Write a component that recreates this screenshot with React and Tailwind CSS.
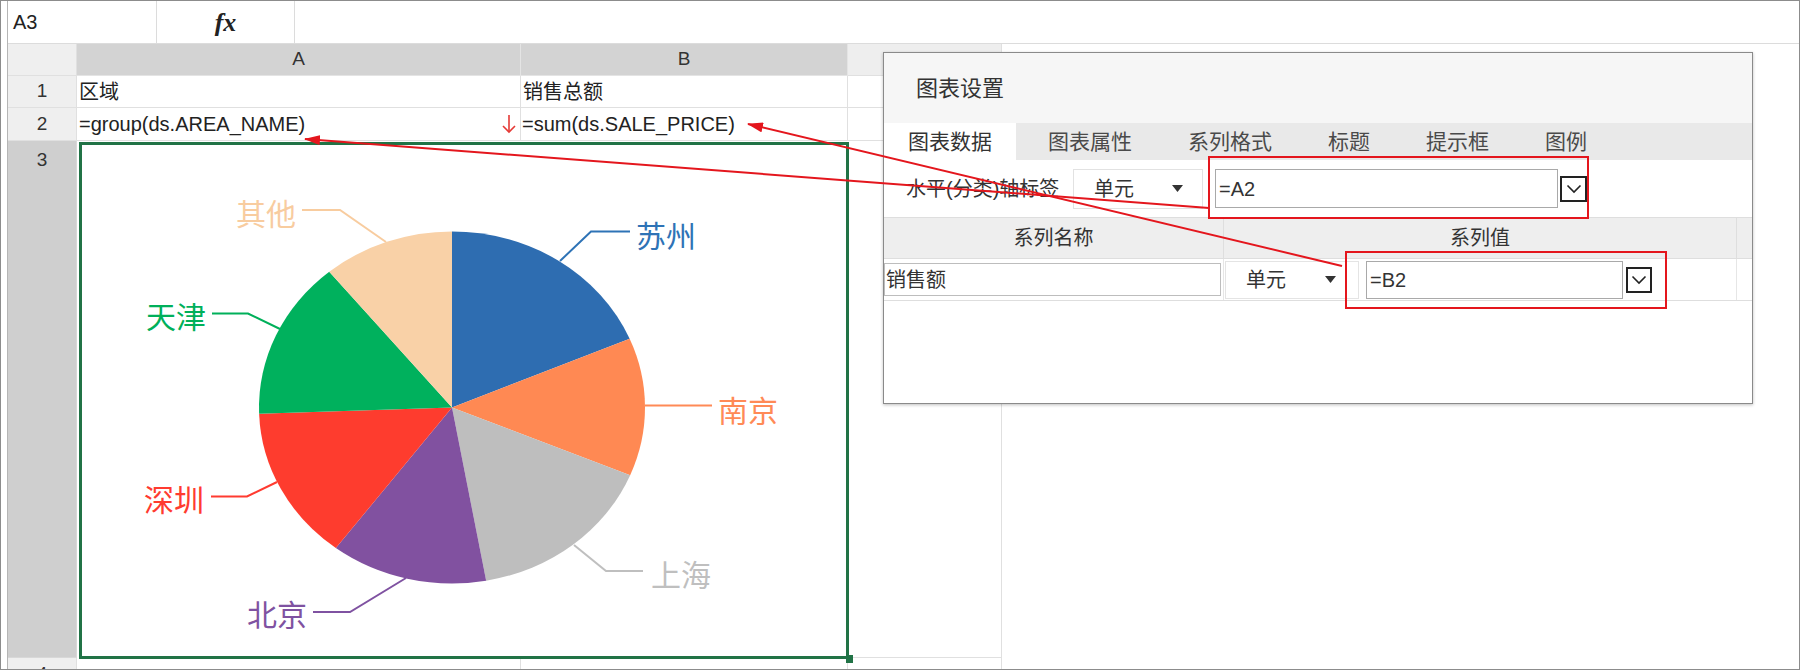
import React from 'react';

const CX = 452;
const CY = 407.5;
const RX = 193;
const RY = 176;

const slices = [
  { from: 0, to: 67, color: '#2e6db1' },
  { from: 67, to: 112.6, color: '#ff8953' },
  { from: 112.6, to: 169.8, color: '#bebebe' },
  { from: 169.8, to: 217, color: '#8151a0' },
  { from: 217, to: 268, color: '#fe3c2e' },
  { from: 268, to: 320.5, color: '#00b15d' },
  { from: 320.5, to: 360, color: '#f9d1a7' },
];

const labels = [
  { text: '其他', color: '#f8cc9f', x: 296, y: 212, anchor: 'end', line: '386,242 340,210 302,210' },
  { text: '苏州', color: '#2e73b6', x: 636, y: 234, anchor: 'start', line: '560,261 591,231.5 630,231.5' },
  { text: '天津', color: '#00b05a', x: 206, y: 315, anchor: 'end', line: '280,329 248,313.5 212,313.5' },
  { text: '南京', color: '#ff8a56', x: 718, y: 409, anchor: 'start', line: '645,405.5 712,405.5' },
  { text: '深圳', color: '#ff3b30', x: 204, y: 498, anchor: 'end', line: '277,482 247,496.5 211,496.5' },
  { text: '上海', color: '#bfbfbf', x: 651, y: 573, anchor: 'start', line: '574,545 606,571 643,571' },
  { text: '北京', color: '#7f52a1', x: 307, y: 613, anchor: 'end', line: '406,578 350,612 313,612' },
];

function pt(a) {
  const r = (a * Math.PI) / 180;
  return [CX + RX * Math.sin(r), CY - RY * Math.cos(r)];
}

function slicePath(a0, a1) {
  const [x0, y0] = pt(a0);
  const [x1, y1] = pt(a1);
  const large = a1 - a0 > 180 ? 1 : 0;
  return `M${CX} ${CY} L${x0} ${y0} A${RX} ${RY} 0 ${large} 1 ${x1} ${y1} Z`;
}

const PieChart = () => (
  <svg className="absolute inset-0" width="771" height="517" viewBox="77 141 771 517">
    {slices.map((s, i) => (
      <path key={i} d={slicePath(s.from, s.to)} fill={s.color} />
    ))}
    {labels.map((l) => (
      <g key={l.text}>
        <polyline points={l.line} fill="none" stroke={l.color} strokeWidth="2" />
        <text
          x={l.x}
          y={l.y}
          fill={l.color}
          fontSize="30"
          textAnchor={l.anchor}
          dominantBaseline="central"
          fontFamily="'Noto Sans CJK SC', sans-serif"
        >
          {l.text}
        </text>
      </g>
    ))}
  </svg>
);

const Triangle = () => (
  <svg width="11" height="7" viewBox="0 0 11 7">
    <path d="M0 0 L11 0 L5.5 7 Z" fill="#333" />
  </svg>
);

const DropButton = ({ className }) => (
  <div className={`flex items-center justify-center border-2 border-[#222] bg-white ${className}`}>
    <svg width="16" height="10" viewBox="0 0 16 10">
      <polyline points="1.5,1.5 8,8 14.5,1.5" fill="none" stroke="#222" strokeWidth="1.6" />
    </svg>
  </div>
);

const tabs = ['图表数据', '图表属性', '系列格式', '标题', '提示框', '图例'];

const ChartDialog = () => (
  <div className="absolute left-[882px] top-[51px] w-[870px] h-[352px] border border-[#8a8a8a] bg-white shadow-[0_1px_3px_rgba(0,0,0,0.25)] text-[#333]">
    <div className="h-[70px] bg-[#f6f6f6] flex items-center pl-[32px] text-[22px]">图表设置</div>
    <div className="h-[37px] bg-[#e9e9e9] flex gap-[8px]">
      {tabs.map((t, i) => (
        <div
          key={t}
          className={`px-[24px] flex items-center text-[21px] ${i === 0 ? 'bg-white text-[#333]' : 'text-[#4a4a4a]'}`}
        >
          {t}
        </div>
      ))}
    </div>
    <div className="h-[57px] flex items-center">
      <div className="w-[189px] pl-[22px] text-[20px] whitespace-nowrap">水平(分类)轴标签</div>
      <div className="w-[130px] h-[40px] border border-[#e2e2e2] flex items-center justify-between pl-[20px] pr-[19px] text-[20px]">
        <span>单元</span>
        <Triangle />
      </div>
      <div className="ml-[12px] w-[343px] h-[39px] border border-[#a9a9a9] flex items-center pl-[3px] text-[20px]">=A2</div>
      <DropButton className="ml-[2px] w-[27px] h-[26px]" />
    </div>
    <div className="h-[42px] flex bg-[#eeeeee] border-y border-[#dedede] text-[20px]">
      <div className="w-[339px] flex items-center justify-center">系列名称</div>
      <div className="w-[513px] border-l border-[#dedede] flex items-center justify-center">系列值</div>
      <div className="flex-1 border-l border-[#dedede]" />
    </div>
    <div className="h-[42px] flex border-b border-[#dedede] text-[20px]">
      <div className="w-[339px] flex items-center">
        <div className="w-[337px] h-[33px] border border-[#bdbdbd] flex items-center pl-[1px]">销售额</div>
      </div>
      <div className="w-[513px] border-l border-[#e6e6e6] flex items-center pl-[1px]">
        <div className="w-[134px] h-[38px] border border-[#e4e4e4] flex items-center justify-between pl-[20px] pr-[22px]">
          <span>单元</span>
          <Triangle />
        </div>
        <div className="ml-[7px] w-[257px] h-[38px] border border-[#a9a9a9] flex items-center pl-[3px]">=B2</div>
        <DropButton className="ml-[3px] w-[26px] h-[26px]" />
      </div>
      <div className="flex-1 border-l border-[#e6e6e6]" />
    </div>
  </div>
);

const Annotations = () => (
  <svg className="absolute left-[-1px] top-[-1px] pointer-events-none" width="1800" height="670" viewBox="0 0 1800 670">
    <defs>
      <marker id="head" markerWidth="16" markerHeight="10" refX="15" refY="5" orient="auto" markerUnits="userSpaceOnUse">
        <path d="M0 0 L16 5 L0 10 Z" fill="#e4161d" />
      </marker>
    </defs>
    <line x1="1209" y1="208" x2="305" y2="139" stroke="#e4161d" strokeWidth="2" markerEnd="url(#head)" />
    <line x1="1342" y1="266" x2="748" y2="124" stroke="#e4161d" strokeWidth="2" markerEnd="url(#head)" />
    <rect x="1209" y="157" width="379" height="61" fill="none" stroke="#e4161d" strokeWidth="2" />
    <rect x="1346" y="252" width="320" height="56" fill="none" stroke="#e4161d" strokeWidth="2" />
  </svg>
);

const DownArrow = () => (
  <svg width="16" height="20" viewBox="0 0 16 20">
    <line x1="8" y1="1" x2="8" y2="18" stroke="#e53935" strokeWidth="1.6" />
    <polyline points="2,12 8,18 14,12" fill="none" stroke="#e53935" strokeWidth="1.6" />
  </svg>
);

const App = () => {
  return (
    <div className="relative w-[1800px] h-[670px] overflow-hidden bg-white border border-[#8c8c8c] font-['Liberation_Sans','Noto_Sans_CJK_SC',sans-serif] text-[#222]">
      <div className="ml-[6px] h-full border-l border-[#b5b5b5]">
        {/* formula bar */}
        <div className="flex h-[43px] border-b border-[#dcdcdc]">
          <div className="w-[149px] border-r border-[#dcdcdc] flex items-center pl-[5px] text-[20px]">A3</div>
          <div className="w-[138px] border-r border-[#dcdcdc] flex items-center justify-center font-['Liberation_Serif',serif] italic font-bold text-[26px]">
            fx
          </div>
        </div>

        {/* column headers */}
        <div className="flex h-[32px] text-[19px] text-[#333]">
          <div className="w-[69px] bg-[#efefef] border-r border-b border-[#e0e0e0]" />
          <div className="w-[444px] bg-[#d3d3d3] border-r border-b border-[#e4e4e4] flex items-center justify-center">A</div>
          <div className="w-[327px] bg-[#d3d3d3] border-r border-b border-[#e4e4e4] flex items-center justify-center">B</div>
          <div className="w-[154px] bg-[#eeeeee] border-r border-b border-[#e0e0e0]" />
        </div>

        {/* row 1 */}
        <div className="flex h-[32px] text-[20px]">
          <div className="w-[69px] bg-[#efefef] border-r border-b border-[#e0e0e0] flex items-center justify-center text-[19px] text-[#333]">1</div>
          <div className="w-[444px] border-r border-b border-[#e0e0e0] flex items-center pl-[2px]">区域</div>
          <div className="w-[327px] border-r border-b border-[#e0e0e0] flex items-center pl-[2px]">销售总额</div>
          <div className="w-[154px] border-r border-b border-[#e0e0e0]" />
        </div>

        {/* row 2 */}
        <div className="flex h-[33px] text-[20px]">
          <div className="w-[69px] bg-[#efefef] border-r border-b border-[#e0e0e0] flex items-center justify-center text-[19px] text-[#333]">2</div>
          <div className="w-[444px] border-r border-b border-[#e0e0e0] flex items-center justify-between pl-[2px] pr-[3px]">
            <span>=group(ds.AREA_NAME)</span>
            <DownArrow />
          </div>
          <div className="w-[327px] border-r border-b border-[#e0e0e0] flex items-center pl-[1px]">=sum(ds.SALE_PRICE)</div>
          <div className="w-[154px] border-r border-b border-[#e0e0e0]" />
        </div>

        {/* row 3 with chart */}
        <div className="flex h-[517px]">
          <div className="w-[69px] bg-[#cfcfcf] border-r border-b border-[#d8d8d8] flex justify-center pt-[5px] text-[19px] text-[#333]">3</div>
          <div className="relative w-[771px] h-[517px]">
            <PieChart />
            <div className="absolute left-[2px] top-[1px] right-[-1px] bottom-[-1px] border-[3px] border-[#217346]" />
            <div className="absolute right-[-5px] bottom-[-5px] w-[7px] h-[8px] bg-[#217346] z-10" />
          </div>
          <div className="w-[154px] border-r border-b border-[#e0e0e0]" />
        </div>

        {/* row 4 */}
        <div className="flex h-[32px] text-[19px]">
          <div className="w-[69px] bg-[#efefef] border-r border-[#e0e0e0] flex items-center justify-center text-[#333]">4</div>
          <div className="w-[444px] border-r border-[#e0e0e0]" />
          <div className="w-[327px] border-r border-[#e0e0e0]" />
          <div className="w-[154px] border-r border-[#e0e0e0]" />
        </div>
      </div>

      <ChartDialog />
      <Annotations />
    </div>
  );
};

export default App;
